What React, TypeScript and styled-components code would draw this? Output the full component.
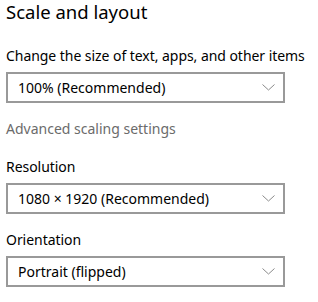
import React from "react";
import styled, { createGlobalStyle } from "styled-components";

const GlobalStyle = createGlobalStyle`
  html, body {
    margin: 0;
    padding: 0;
    background: #ffffff;
  }
  body {
    font-family: "Noto Sans", "Open Sans", sans-serif;
    color: #000000;
  }
`;

const Page = styled.div`
  width: 318px;
  height: 302px;
  padding: 0 6px;
  box-sizing: border-box;
  display: flex;
  flex-direction: column;
`;

const Title = styled.h2`
  margin: 0;
  font-size: 18.5px;
  font-weight: 400;
  line-height: 24px;
`;

const Label = styled.div<{ $top: number }>`
  margin-top: ${(p) => p.$top}px;
  font-size: 14px;
  letter-spacing: -0.05px;
  line-height: 20px;
  white-space: nowrap;
`;

const Link = styled.div`
  margin-top: 16px;
  font-size: 14px;
  line-height: 20px;
  color: #6b6b6b;
`;

const Select = styled.div`
  margin-top: 6px;
  width: 279px;
  height: 31px;
  box-sizing: border-box;
  border: 2px solid #999999;
  display: flex;
  align-items: center;
  justify-content: space-between;
  padding: 0 8px 0 10px;
  font-size: 14px;
`;

const Chevron = () => (
  <svg width="13" height="7" viewBox="0 0 13 7">
    <path d="M0.5 0.5 L6.5 6 L12.5 0.5" fill="none" stroke="#8a8a8a" strokeWidth="1" />
  </svg>
);

const Dropdown = ({ value }: { value: string }) => (
  <Select>
    <span>{value}</span>
    <Chevron />
  </Select>
);

export default function App() {
  return (
    <>
      <GlobalStyle />
      <Page>
        <Title>Scale and layout</Title>
        <Label $top={22}>Change the size of text, apps, and other items</Label>
        <Dropdown value="100% (Recommended)" />
        <Link>Advanced scaling settings</Link>
        <Label $top={18}>Resolution</Label>
        <Dropdown value="1080 × 1920 (Recommended)" />
        <Label $top={16}>Orientation</Label>
        <Dropdown value="Portrait (flipped)" />
      </Page>
    </>
  );
}
